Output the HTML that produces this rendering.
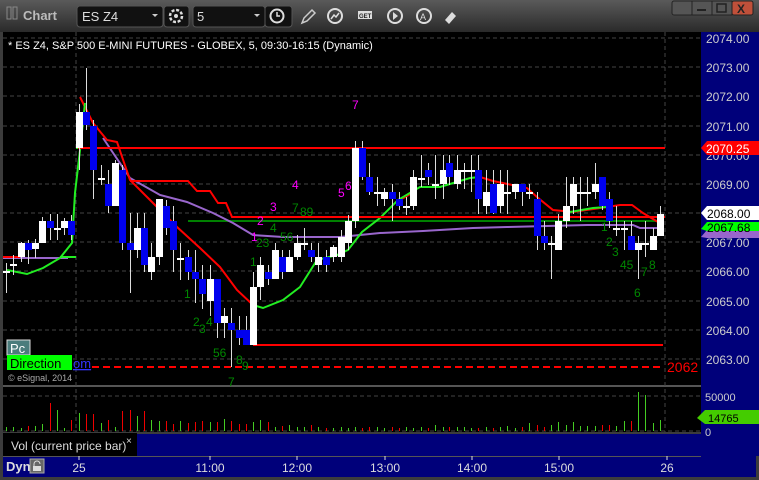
<!DOCTYPE html>
<html><head><meta charset="utf-8"><style>
*{margin:0;padding:0}
body{width:759px;height:480px;overflow:hidden;background:#000;font-family:"Liberation Sans",sans-serif}
svg{display:block}
</style></head><body>
<svg id="s" width="759" height="480" xmlns="http://www.w3.org/2000/svg" font-family="Liberation Sans, sans-serif">
<defs>
<linearGradient id="tb" x1="0" y1="0" x2="0" y2="1"><stop offset="0" stop-color="#5a5a5a"/><stop offset="1" stop-color="#2a2a2a"/></linearGradient>
</defs>
<rect width="759" height="480" fill="#3c3c3c"/>
<rect width="759" height="32" fill="url(#tb)"/>
<rect x="7" y="7" width="4" height="12" fill="none" stroke="#888" stroke-width="1"/>
<rect x="13" y="7" width="4" height="12" fill="none" stroke="#888" stroke-width="1"/>
<text x="23" y="20" fill="#bbb" font-size="13" font-weight="bold">Chart</text>
<rect x="77" y="6" width="86" height="21" rx="3" fill="#111" stroke="#555"/>
<text x="82" y="21" fill="#ddd" font-size="13">ES Z4</text>
<path d="M152 14l3 3 3-3z" fill="#ccc"/>
<rect x="164" y="6" width="25" height="21" rx="3" fill="#111" stroke="#555"/>
<circle cx="176" cy="16" r="6" fill="none" stroke="#ddd" stroke-width="2.5" stroke-dasharray="3 1.7"/>
<circle cx="176" cy="16" r="2" fill="#ddd"/>
<rect x="193" y="6" width="72" height="21" rx="3" fill="#111" stroke="#555"/>
<text x="197" y="21" fill="#ddd" font-size="13">5</text>
<path d="M254 14l3 3 3-3z" fill="#ccc"/>
<rect x="265" y="6" width="27" height="21" rx="3" fill="#111" stroke="#555"/>
<circle cx="277" cy="16" r="6.5" fill="none" stroke="#ddd" stroke-width="2"/>
<path d="M277 12v4h3" stroke="#ddd" stroke-width="1.5" fill="none"/>
<path d="M302 23l2-5 8-8 3 3-8 8z" fill="none" stroke="#ccc" stroke-width="1.5"/>
<circle cx="335" cy="16" r="7" fill="none" stroke="#ddd" stroke-width="2"/><path d="M331 19l3-4 2 2 3-4" stroke="#ddd" stroke-width="1.5" fill="none"/>
<rect x="358" y="11" width="14" height="8" fill="#ddd"/><text x="359" y="18" font-size="6" font-weight="bold" fill="#222">GET</text>
<circle cx="395" cy="16" r="7" fill="none" stroke="#ddd" stroke-width="2"/><path d="M393 12v8l5-4z" fill="#ddd"/>
<circle cx="424" cy="16" r="7" fill="none" stroke="#ddd" stroke-width="2"/><text x="420" y="20" font-size="9" fill="#ddd">A</text>
<path d="M445 20l7-8 4 4-7 8z" fill="#ddd"/>
<rect x="672" y="1" width="21" height="14" rx="2" fill="#555" stroke="#222"/>
<rect x="692" y="1" width="20" height="14" fill="#555" stroke="#222"/><rect x="697" y="9" width="9" height="2" fill="#222"/>
<rect x="712" y="1" width="20" height="14" fill="#555" stroke="#222"/><rect x="717" y="4" width="9" height="8" fill="none" stroke="#222" stroke-width="1.5"/>
<rect x="732" y="1" width="21" height="14" rx="2" fill="#c0503a" stroke="#222"/><text x="737" y="13" font-size="12" font-weight="bold" fill="#222">X</text>
<rect x="3" y="32" width="698" height="353" fill="#000"/>
<rect x="701" y="32" width="58" height="424" fill="#00007a"/>
<rect x="3" y="387" width="698" height="45" fill="#000"/>
<rect x="3" y="385" width="698" height="2" fill="#555"/>
<g id="grid" stroke="#444" stroke-dasharray="4 3" stroke-width="1"></g>
<g id="lines" fill="none" stroke-width="2"></g>
<g id="candles"></g>
<g id="vol"></g>
<g id="lbl" font-size="11"></g>
<text x="8" y="49" fill="#fff" font-size="11">* ES Z4, S&amp;P 500 E-MINI FUTURES - GLOBEX, 5, 09:30-16:15 (Dynamic)</text>
<rect x="7" y="340" width="23" height="15" fill="#4a7c7c" stroke="#ddd"/><text x="10" y="353" fill="#fff" font-size="13">Pc</text>
<rect x="7" y="355" width="65" height="15" fill="#00ff00"/><text x="10" y="368" fill="#000" font-size="13">Direction</text>
<text x="73" y="368" fill="#33f" font-size="13" text-decoration="underline">om</text>
<text x="8" y="381" fill="#aaa" font-size="9">© eSignal, 2014</text>
<text x="667" y="372" fill="#f00" font-size="14">2062</text>
<path d="M701 148l6-7h52v14h-52z" fill="#f00"/><text x="706" y="153" fill="#fff" font-size="12">2070.25</text>
<path d="M701 237l6-7h52v8h-52z" fill="#9966cc"/>
<path d="M701 229l6-7h52v9h-52z" fill="#00ff00"/><text x="707" y="232" fill="#000" font-size="12">2067.68</text>
<path d="M701 213l6-7h52v14h-52z" fill="#fff"/><text x="707" y="218" fill="#000" font-size="12">2068.00</text>
<path d="M697 418l8-8h54v14h-54z" fill="#44cc00"/><text x="708" y="422" fill="#000" font-size="11">14765</text>
<text x="705" y="401" fill="#ccc" font-size="11">50000</text>
<text x="705" y="436" fill="#ccc" font-size="11">0</text>
<rect x="3" y="433" width="134" height="23" fill="#000"/>
<rect x="137" y="434" width="564" height="22" fill="#00007a"/>
<text x="11" y="450" fill="#ddd" font-size="12">Vol (current price bar)</text>
<text x="126" y="444" fill="#ddd" font-size="10">×</text>
<rect x="3" y="456" width="753" height="21" fill="#00007a"/>
<rect x="3" y="456" width="698" height="1" fill="#555"/>
<text x="6" y="471" fill="#ddd" font-size="13" font-weight="bold">Dyn</text>
<rect x="30" y="459" width="14" height="14" fill="#666" stroke="#aaa"/><path d="M34 467v-3a3 3 0 0 1 6 0" stroke="#ddd" fill="none"/><rect x="33" y="466" width="8" height="5" fill="#ddd"/>
<g fill="#ddd" font-size="12" text-anchor="middle">
<text x="79" y="472">25</text><text x="210" y="472">11:00</text><text x="297" y="472">12:00</text><text x="385" y="472">13:00</text><text x="472" y="472">14:00</text><text x="559" y="472">15:00</text><text x="667" y="472">26</text>
</g>
<g stroke="#ddd"><line x1="79" y1="456" x2="79" y2="460"/><line x1="210" y1="456" x2="210" y2="460"/><line x1="297" y1="456" x2="297" y2="460"/><line x1="385" y1="456" x2="385" y2="460"/><line x1="472" y1="456" x2="472" y2="460"/><line x1="559" y1="456" x2="559" y2="460"/><line x1="667" y1="456" x2="667" y2="460"/></g>
</svg>
<script>
const NS="http://www.w3.org/2000/svg";
function el(p,t,a,txt){const e=document.createElementNS(NS,t);for(const k in a)e.setAttribute(k,a[k]);if(txt!=null)e.textContent=txt;document.getElementById(p).appendChild(e);return e;}
for(let i=0;i<12;i++){const y=Math.round(38+i*29.18);if(y>380)break;el('grid','line',{x1:3,y1:y,x2:701,y2:y});el('lbl','text',{x:706,y:y+5,fill:'#ccc','font-size':12},(2074-i)+'.00');}
el('grid','line',{x1:3,y1:396,x2:701,y2:396});el('grid','line',{x1:3,y1:431,x2:701,y2:431});
el('grid','line',{x1:76,y1:32,x2:76,y2:432});el('grid','line',{x1:665,y1:32,x2:665,y2:432});
function pl(pts,c,w,dash){const a={points:pts,stroke:c,'stroke-width':w||2,fill:'none'};if(dash)a['stroke-dasharray']=dash;el('lines','polyline',a);}
pl("188,221 663,221","#008000",2);
pl("3,258 68,258","#9966cc",2);
pl("103,138 130,178 160,195 187,202 213,213 233,223 253,235 283,237 340,237 380,233 423,231 473,228 507,227 587,225 633,225 640,228 663,228","#9966cc",2);
pl("3,257 20,257","#f00",2);
pl("80,97 93,123 107,140 117,142 130,180 157,207 177,227 200,248 220,267 237,290 253,305","#f00",2);
pl("400,200 412,193","#f00",2);
pl("480,177 493,181 527,188 537,197 553,210 573,212 607,207 620,205 632,205 643,213 658,222","#f00",2);
pl("60,257 76,257","#22ee22",2);pl("76,148 90,148","#22ee22",2);
pl("7,270 27,274 43,268 60,258 72,243 75,193 80,150 85,103","#22ee22",2);
pl("253,305 263,308 283,300 300,287 317,260 337,255 348,250 362,232 380,218 398,200 420,187 440,187 470,178 480,177","#22ee22",2);
pl("570,212 593,208 607,207","#22ee22",2);
pl("355,217 600,217","#22ee22",2);
pl("78,148 665,148","#f00",2);
pl("130,181 188,181 197,191 210,191 218,203 226,203 232,217 665,217","#f00",2);
pl("253,345 663,345","#f00",2);
pl("92,367 663,367","#f00",2,"7 4");
const C=[[6,271,273,263,293,'d'],[13,264,265,255,275,'d'],[21,243,257,242,262,'w'],[28,243,250,240,264,'b'],[35,243,249,239,258,'w'],[42,221,243,217,243,'w'],[50,221,228,214,240,'b'],[57,228,229,214,240,'d'],[64,221,228,218,235,'w'],[71,221,235,215,240,'b'],
[79,112,148,104,170,'w'],[86,112,125,68,130,'b'],[93,126,170,120,199,'b'],[101,178,179,165,185,'d'],[108,184,206,170,213,'b'],[115,163,206,160,206,'w'],[122,170,243,165,250,'b'],[130,243,250,213,293,'b'],[137,228,250,213,258,'w'],[144,228,265,213,272,'b'],[151,257,272,243,280,'w'],[159,199,257,199,265,'w'],[166,206,228,200,235,'b'],[173,221,250,206,272,'b'],[180,258,259,243,280,'d'],[188,257,272,250,280,'b'],[195,272,279,250,303,'b'],[202,279,294,265,309,'b'],[210,279,301,265,316,'w'],[217,279,323,279,338,'b'],[224,316,323,308,338,'w'],[231,323,330,308,367,'b'],[239,330,338,316,345,'b'],[246,330,345,316,345,'b'],[253,287,345,272,345,'w'],[260,265,287,257,300,'w'],[268,272,279,265,285,'b'],[275,250,279,243,279,'w'],[282,257,272,250,279,'b'],[289,257,272,250,272,'w'],[297,243,257,235,260,'w'],[304,243,244,228,250,'d'],[311,250,257,243,262,'b'],[318,257,265,243,272,'w'],[326,257,265,250,272,'b'],[333,247,257,245,262,'w'],
[341,237,257,230,262,'w'],[348,221,243,215,250,'w'],[355,148,221,141,228,'w'],[362,148,177,141,180,'b'],[369,177,192,163,195,'b'],[377,192,193,177,206,'d'],[384,192,199,188,206,'w'],[392,192,199,184,221,'b'],[399,199,206,192,210,'b'],[406,206,207,197,215,'d'],[413,177,206,170,210,'w'],[421,178,179,155,187,'d'],[428,170,177,163,185,'b'],[435,184,185,155,199,'d'],[443,170,184,155,199,'w'],[449,163,177,155,185,'b'],[457,170,184,155,189,'w'],[464,170,171,163,189,'d'],[471,170,171,155,192,'d'],[478,170,199,155,214,'b'],[486,192,206,170,214,'w'],[493,184,213,170,214,'b'],[500,184,206,170,213,'w'],[507,192,193,170,214,'d'],[515,184,192,184,199,'w'],[522,184,192,184,206,'b'],[529,192,193,184,199,'d'],[537,199,236,192,250,'b'],[544,236,243,221,250,'b'],[551,243,244,236,279,'d'],[558,221,250,214,250,'w'],[566,206,221,177,228,'w'],[573,184,206,177,214,'w'],[580,192,193,177,221,'d'],[587,192,193,177,206,'d'],[595,184,192,163,199,'w'],[602,177,206,177,210,'b'],[609,199,221,192,228,'b'],[616,228,229,206,236,'d'],[624,228,229,221,250,'d'],[631,236,250,221,250,'b'],[638,243,250,236,279,'w'],[645,243,244,221,257,'d'],[653,236,250,228,250,'w'],[660,214,236,206,236,'w']];
for(const c of C){el('candles','line',{x1:c[0]+.5,y1:c[3],x2:c[0]+.5,y2:c[4],stroke:'#ddd','stroke-width':1});
 const col=c[5]=='b'?'#0000ee':'#fff';let h=c[2]-c[1];if(c[5]=='d'){el('candles','rect',{x:c[0]-3,y:c[1],width:7,height:2,fill:'#fff'});}else el('candles','rect',{x:c[0]-3,y:c[1],width:7,height:Math.max(h,2),fill:col});
}
const V=[4,4,3,5,5,7,28,21,3,11,18,17,17,8,11,4,20,21,15,20,11,10,10,7,10,8,9,10,9,9,12,10,7,7,9,11,9,4,5,6,4,4,6,4,3,3,
4,3,4,3,4,4,3,4,3,4,3,4,3,6,4,4,4,4,3,3,4,3,4,5,3,4,8,6,4,6,9,6,9,5,5,5,6,6,5,10,10,39,36,8,11];
for(let i=0;i<C.length;i++){const c=C[i];const v=V[i]||4;const red=(c[5]=='b');el('vol','rect',{x:c[0],y:431-v,width:1,height:v,fill:red?'#e00':'#4c2'});}
const G='#008800',M='#ff00ff';
const L=[[352,109,'7',M],[345,190,'6',M],[338,197,'5',M],[292,189,'4',M],[270,211,'3',M],[257,225,'2',M],[251,241,'1',M],
[292,212,'7',G],[300,216,'89',G],[270,232,'4',G],[280,241,'56',G],[256,247,'23',G],[250,266,'1',G],[184,298,'1',G],[193,326,'2',G],[199,333,'3',G],[206,326,'4',G],[213,357,'56',G],[236,364,'8',G],[242,370,'9',G],[228,386,'7',G],
[601,231,'1',G],[606,246,'2',G],[612,256,'3',G],[620,269,'45',G],[641,276,'7',G],[649,269,'8',G],[634,297,'6',G]];
for(const l of L)el('lbl','text',{x:l[0],y:l[1],fill:l[3],'font-size':12},l[2]);
</script>
</body></html>
